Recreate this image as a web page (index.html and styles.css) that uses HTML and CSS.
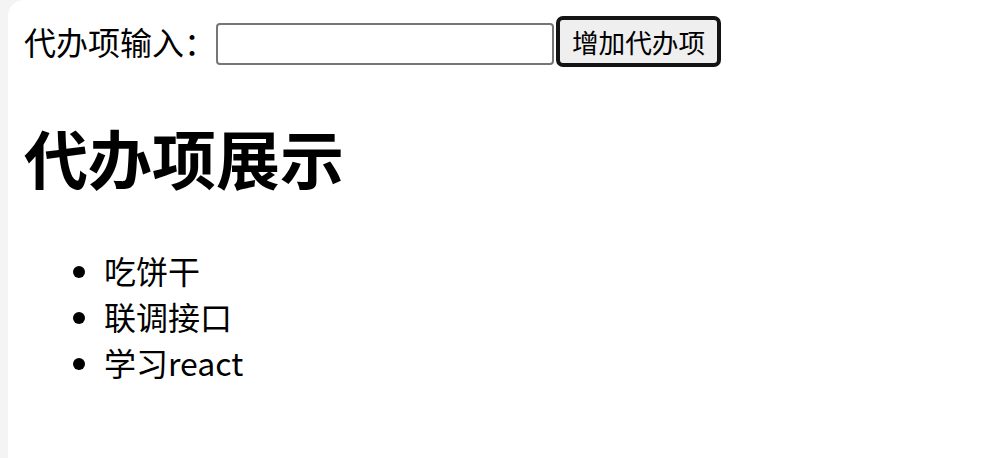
FILE: index.html
```html
<!DOCTYPE html>
<html lang="zh-CN">
<head>
<meta charset="utf-8">
<title>代办项</title>
<link rel="stylesheet" href="styles.css">
</head>
<body>
<div class="panel">
  <div class="input-row">
    <span class="label">代办项输入：</span><input class="todo-input" type="text"><button class="add-btn">增加代办项</button>
  </div>
  <h1 class="title">代办项展示</h1>
  <ul class="todo-list">
    <li>吃饼干</li>
    <li>联调接口</li>
    <li>学习react</li>
  </ul>
</div>
</body>
</html>
```

FILE: styles.css
```css
html, body {
  margin: 0;
  height: 100%;
}
body {
  background: #f4f4f4;
  font-family: "Noto Sans CJK SC", "Noto Sans", sans-serif;
  font-size: 32px;
  color: #000;
  overflow: hidden;
}
.panel {
  margin-left: 8px;
  min-height: 100%;
  background: #fff;
  border-top-left-radius: 16px;
  padding: 16px 16px;
  box-sizing: border-box;
}
.input-row {
  display: flex;
  align-items: center;
  height: 51px;
}
.label {
  line-height: 1.448;
}
.todo-input {
  align-self: flex-end;
  margin: 0 2px 2px 0;
  box-sizing: border-box;
  width: 338px;
  height: 42px;
  border: 2px solid #767676;
  border-radius: 4px;
  padding: 2px 4px;
  font-size: 26px;
  font-family: inherit;
  background: #fff;
}
.add-btn {
  box-sizing: border-box;
  height: 51px;
  width: 165px;
  margin: 0;
  padding: 0 10px;
  border: 4px solid #141414;
  border-radius: 7px;
  background: #efefef;
  font-family: "Noto Sans CJK SC", "Noto Sans", sans-serif;
  font-size: 26.67px;
  color: #000;
}
.title {
  margin: 43px 0 0;
  font-size: 64px;
  font-weight: bold;
  line-height: 1.448;
}
.todo-list {
  margin: 44px 0 0;
  padding-left: 80px;
  line-height: 1.448;
}
```
